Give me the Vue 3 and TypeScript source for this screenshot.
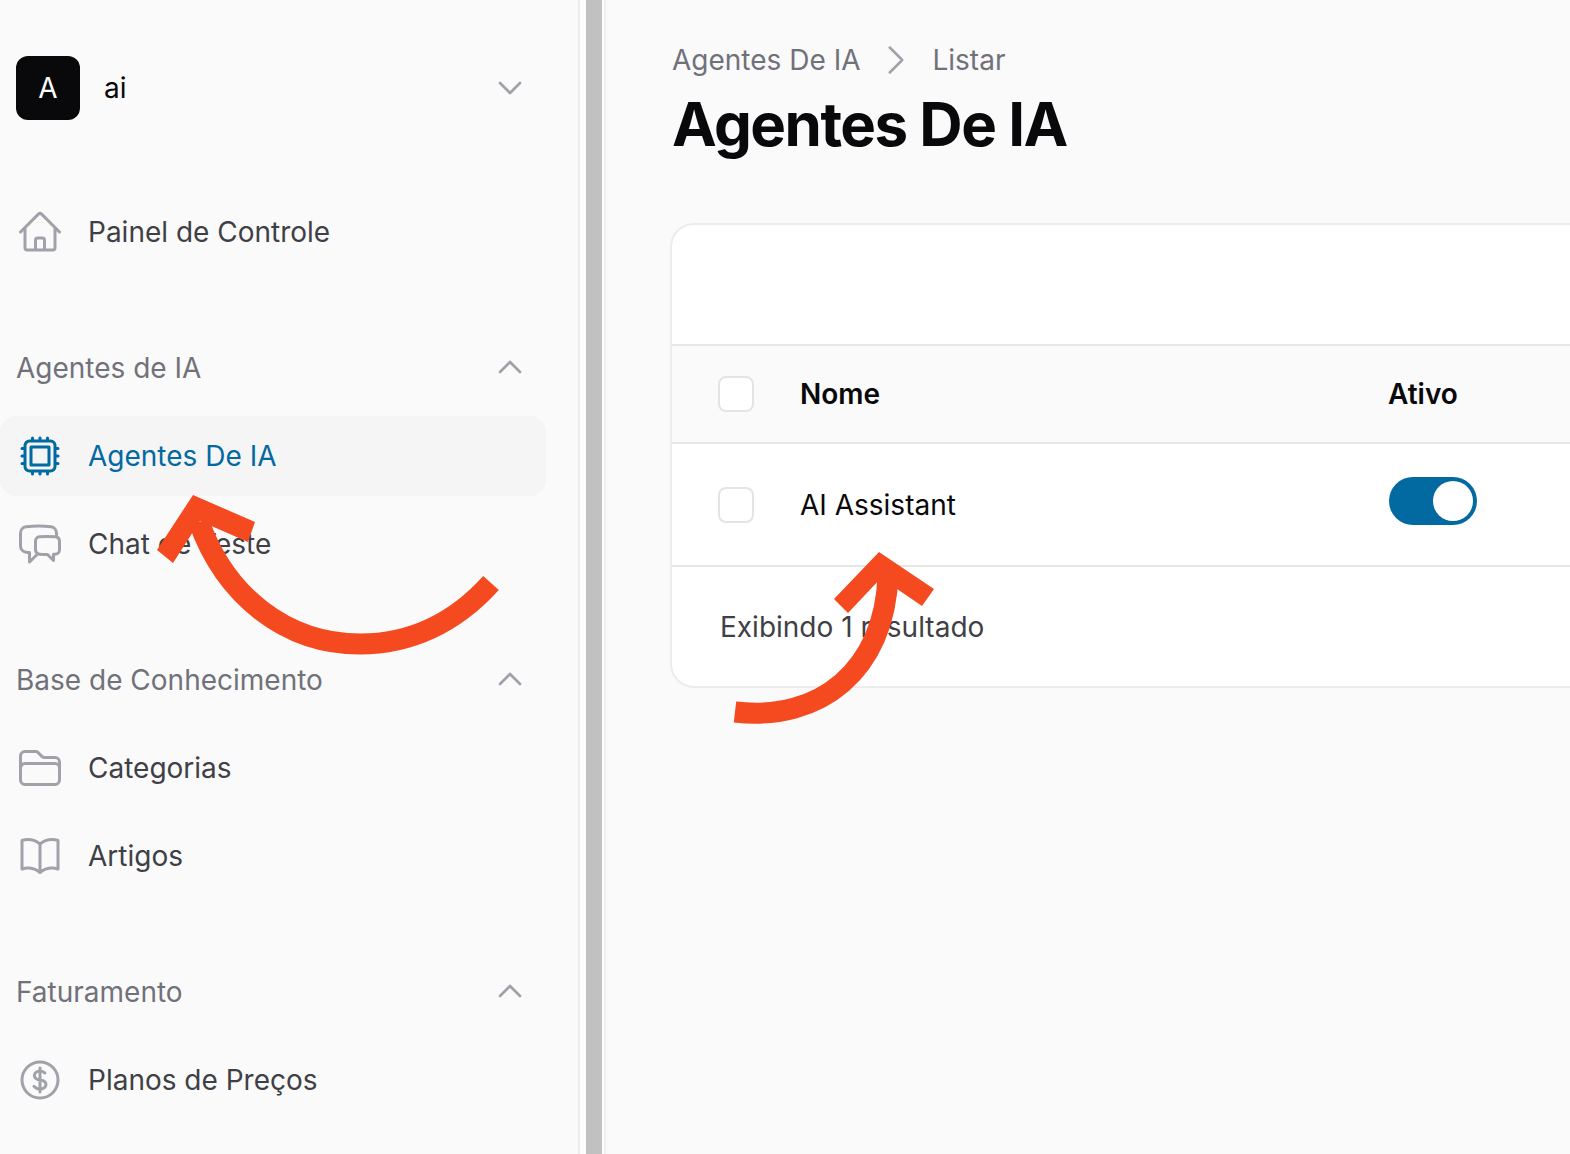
<script setup lang="ts">
interface NavItem { label: string; icon: string; active?: boolean }
interface NavGroup { label?: string; items: NavItem[] }

const icons: Record<string, string> = {
  home: 'M2.25 12l8.954-8.955c.44-.439 1.152-.439 1.591 0L21.75 12M4.5 9.75v10.125c0 .621.504 1.125 1.125 1.125H9.75v-4.875c0-.621.504-1.125 1.125-1.125h2.25c.621 0 1.125.504 1.125 1.125V21h4.125c.621 0 1.125-.504 1.125-1.125V9.75M8.25 21h8.25',
  cpu: 'M8.25 3v1.5M4.5 8.25H3m18 0h-1.5M4.5 12H3m18 0h-1.5m-15 3.75H3m18 0h-1.5M8.25 19.5V21M12 3v1.5m0 15V21m3.75-18v1.5m0 15V21m-9-1.5h10.5a2.25 2.25 0 002.25-2.25V6.75a2.25 2.25 0 00-2.25-2.25H6.75A2.25 2.25 0 004.5 6.75v10.5a2.25 2.25 0 002.25 2.25zm.75-12h9v9h-9v-9z',
  chat: 'M20.25 8.511c.884.284 1.5 1.128 1.5 2.097v4.286c0 1.136-.847 2.1-1.98 2.193-.34.027-.68.052-1.02.072v3.091l-3-3c-1.354 0-2.694-.055-4.02-.163a2.115 2.115 0 01-.825-.242m9.345-8.334a2.126 2.126 0 00-.476-.095 48.64 48.64 0 00-8.048 0c-1.131.094-1.976 1.057-1.976 2.192v4.286c0 .837.46 1.58 1.155 1.951m9.345-8.334V6.637c0-1.621-1.152-3.026-2.76-3.235A48.455 48.455 0 0011.25 3c-2.115 0-4.198.137-6.24.402-1.608.209-2.76 1.614-2.76 3.235v6.226c0 1.621 1.152 3.026 2.76 3.235.577.075 1.157.14 1.74.194V21l4.155-4.155',
  folder: 'M2.25 12.75V12A2.25 2.25 0 014.5 9.75h15A2.25 2.25 0 0121.75 12v.75m-8.69-6.44l-2.12-2.12a1.5 1.5 0 00-1.061-.44H4.5A2.25 2.25 0 002.25 6v12a2.25 2.25 0 002.25 2.25h15A2.25 2.25 0 0021.75 18V9a2.25 2.25 0 00-2.25-2.25h-5.379a1.5 1.5 0 01-1.06-.44z',
  book: 'M12 6.042A8.967 8.967 0 006 3.75c-1.052 0-2.062.18-3 .512v14.25A8.987 8.987 0 016 18c2.305 0 4.408.867 6 2.292m0-14.25a8.966 8.966 0 016-2.292c1.052 0 2.062.18 3 .512v14.25A8.987 8.987 0 0018 18a8.967 8.967 0 00-6 2.292m0-14.25v14.25',
  dollar: 'M12 6v12m-3-2.818l.879.659c1.171.879 3.07.879 4.242 0 1.172-.879 1.172-2.303 0-3.182C13.536 12.219 12.768 12 12 12c-.725 0-1.45-.22-2.003-.659-1.106-.879-1.106-2.303 0-3.182s2.9-.879 4.006 0l.415.33M21 12a9 9 0 11-18 0 9 9 0 0118 0z',
}

const groups: NavGroup[] = [
  { items: [{ label: 'Painel de Controle', icon: 'home' }] },
  {
    label: 'Agentes de IA',
    items: [
      { label: 'Agentes De IA', icon: 'cpu', active: true },
      { label: 'Chat de Teste', icon: 'chat' },
    ],
  },
  {
    label: 'Base de Conhecimento',
    items: [
      { label: 'Categorias', icon: 'folder' },
      { label: 'Artigos', icon: 'book' },
    ],
  },
  { label: 'Faturamento', items: [{ label: 'Planos de Preços', icon: 'dollar' }] },
]
</script>

<template>
  <div class="page">
    <aside class="sidebar">
      <div class="tenant">
        <div class="avatar">A</div>
        <span class="tenant-name">ai</span>
        <svg class="chevron" viewBox="0 0 24 24" fill="none"><path d="M19.5 8.25l-7.5 7.5-7.5-7.5" /></svg>
      </div>
      <nav class="nav">
        <section v-for="(group, i) in groups" :key="i" class="group">
          <div v-if="group.label" class="group-label">
            <span>{{ group.label }}</span>
            <svg class="chevron" viewBox="0 0 24 24" fill="none"><path d="M4.5 15.75l7.5-7.5 7.5 7.5" /></svg>
          </div>
          <ul class="items">
            <li v-for="item in group.items" :key="item.label" class="item" :class="{ active: item.active }">
              <svg class="icon" viewBox="0 0 24 24" fill="none"><path :d="icons[item.icon]" /></svg>
              <span>{{ item.label }}</span>
            </li>
          </ul>
        </section>
      </nav>
    </aside>

    <div class="gutter"><div class="scroll-thumb"></div></div>

    <main class="main">
      <div class="crumbs">
        <span>Agentes De IA</span>
        <svg class="crumb-sep" viewBox="0 0 24 24" fill="none"><path d="M8.25 4.5l7.5 7.5-7.5 7.5" /></svg>
        <span>Listar</span>
      </div>
      <h1 class="title">Agentes De IA</h1>

      <div class="card">
        <div class="toolbar"></div>
        <div class="row head">
          <span class="check"></span>
          <span>Nome</span>
          <span>Ativo</span>
        </div>
        <div class="row body">
          <span class="check"></span>
          <span>AI Assistant</span>
          <span class="toggle"><span class="knob"></span></span>
        </div>
        <div class="footer">Exibindo 1 resultado</div>
      </div>
    </main>

    <svg class="arrows" viewBox="0 0 1570 1154" fill="none">
      <path class="shaft" d="M491 583C455 623 410 644 360 644C285 644 225 595 199 522" />
      <polygon class="head-shape" points="157,550 193,495 255,522 248,542 200,521 173,563" />
      <path class="shaft" d="M735 712C820 722 885 670 888 575" />
      <polygon class="head-shape" points="834,599 879,552 934,589 922,606 881,578 848,613" />
    </svg>
  </div>
</template>

<style scoped>
.page {
  position: relative;
  display: flex;
  width: 1570px;
  height: 1154px;
  overflow: hidden;
  background: #fafafa;
  font-family: Inter, "Liberation Sans", sans-serif;
  font-size: 28px;
  line-height: 40px;
}
.sidebar {
  flex: none;
  box-sizing: border-box;
  width: 580px;
  padding-top: 56px;
  border-right: 2px solid #ececec;
}
.tenant {
  display: flex;
  align-items: center;
  gap: 24px;
  height: 64px;
  padding: 0 52px 0 16px;
  margin-bottom: 72px;
}
.avatar {
  display: flex;
  align-items: center;
  justify-content: center;
  flex: none;
  width: 64px;
  height: 64px;
  border-radius: 12px;
  background: #09090b;
  color: #fff;
}
.tenant-name {
  flex: 1;
  color: #09090b;
}
.chevron {
  flex: none;
  width: 32px;
  height: 32px;
  stroke: #a1a1aa;
  stroke-width: 2;
  stroke-linecap: round;
  stroke-linejoin: round;
}
.nav {
  display: flex;
  flex-direction: column;
  gap: 72px;
}
.group-label {
  display: flex;
  align-items: center;
  justify-content: space-between;
  height: 48px;
  margin-bottom: 24px;
  padding: 0 52px 0 16px;
  color: #71717a;
}
.group-label .chevron {
  margin-top: -2px;
}
.items {
  display: flex;
  flex-direction: column;
  gap: 8px;
  margin: 0;
  padding: 0;
  list-style: none;
  width: 546px;
}
.item {
  display: flex;
  align-items: center;
  gap: 24px;
  height: 80px;
  padding: 0 16px;
  border-radius: 16px;
  color: #3f3f46;
}
.item.active {
  background: #f5f5f5;
  color: #0369a1;
}
.icon {
  flex: none;
  width: 48px;
  height: 48px;
  stroke: #a1a1aa;
  stroke-width: 1.5;
  stroke-linecap: round;
  stroke-linejoin: round;
}
.active .icon {
  stroke: #0369a1;
}
.gutter {
  flex: none;
  box-sizing: border-box;
  width: 26px;
  padding: 0 4px 0 6px;
  background: #fdfdfd;
  border-right: 2px solid #f0f0f0;
}
.scroll-thumb {
  width: 16px;
  height: 100%;
  background: #c1c1c1;
}
.main {
  flex: 1;
  min-width: 0;
  padding: 40px 0 0 66px;
}
.crumbs {
  display: flex;
  align-items: center;
  gap: 16px;
  color: #71717a;
}
.crumb-sep {
  flex: none;
  width: 40px;
  height: 40px;
  stroke: #a1a1aa;
  stroke-width: 1.5;
  stroke-linecap: round;
  stroke-linejoin: round;
}
.title {
  margin: 8px 0 0;
  height: 72px;
  font-size: 60px;
  font-weight: 700;
  line-height: 72px;
  letter-spacing: -1.5px;
  color: #09090b;
}
.card {
  box-sizing: border-box;
  width: 960px;
  margin: 63px 0 0 -2px;
  height: 465px;
  border: 2px solid #ececec;
  border-radius: 24px;
  background: #fff;
  overflow: hidden;
}
.toolbar {
  height: 119px;
  border-bottom: 2px solid #e6e6e6;
}
.row {
  display: grid;
  grid-template-columns: 82px 588px 1fr;
  align-items: center;
  padding-left: 46px;
  color: #09090b;
  border-bottom: 2px solid #e6e6e6;
}
.head {
  height: 96px;
  background: #fafafa;
  font-weight: 600;
}
.body {
  height: 121px;
}
.check {
  box-sizing: border-box;
  width: 36px;
  height: 36px;
  border: 2px solid #e4e4e7;
  border-radius: 8px;
  background: #fff;
}
.toggle {
  display: flex;
  justify-content: flex-end;
  box-sizing: border-box;
  width: 88px;
  height: 48px;
  margin: -8px 0 0 1px;
  padding: 4px;
  border-radius: 24px;
  background: #0369a1;
}
.knob {
  width: 40px;
  height: 40px;
  border-radius: 50%;
  background: #fff;
}
.footer {
  padding: 40px 0 0 48px;
  color: #3f3f46;
}
.arrows {
  position: absolute;
  inset: 0;
  width: 1570px;
  height: 1154px;
  pointer-events: none;
}
.shaft {
  stroke: #f54a20;
  stroke-width: 21;
}
.head-shape {
  fill: #f54a20;
}
</style>

<style>
html, body {
  margin: 0;
  background: #fafafa;
}
</style>
